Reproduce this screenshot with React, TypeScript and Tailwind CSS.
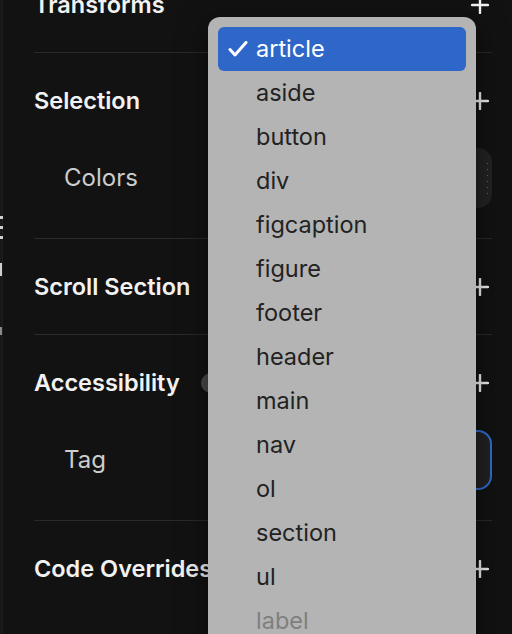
import React from 'react';

const tags = [
  'article',
  'aside',
  'button',
  'div',
  'figcaption',
  'figure',
  'footer',
  'header',
  'main',
  'nav',
  'ol',
  'section',
  'ul'
];

const PlusIcon = () => (
  <svg width="18" height="18" viewBox="0 0 18 18" className="mr-[3px] shrink-0">
    <path d="M9 1v16M1 9h16" stroke="#f2f2f2" strokeWidth="2.4" strokeLinecap="round" />
  </svg>
);

const CheckIcon = () => (
  <svg width="20" height="16" viewBox="0 0 20 16" className="absolute left-[10px] top-[14px]">
    <path
      d="M2 8.5l5 5.5L18 1.5"
      fill="none"
      stroke="#ffffff"
      strokeWidth="3"
      strokeLinecap="round"
      strokeLinejoin="round"
    />
  </svg>
);

const Divider = () => <div className="h-px bg-[#2a2a2a]" />;

const SectionHeader = ({ title, extra }: { title: string; extra?: React.ReactNode }) => (
  <div className="flex h-[95px] items-center justify-between">
    <div className="flex items-center gap-[21px]">
      <span className="text-[23.5px] font-semibold text-[#f2f2f2]">{title}</span>
      {extra}
    </div>
    <PlusIcon />
  </div>
);

const PropertyRow = ({ label, focused }: { label: string; focused?: boolean }) => (
  <div className="box-content flex h-[60px] items-center pb-[30px]">
    <span className="w-[190px] shrink-0 pl-[30px] text-[24px] text-[#cdcdcd]">{label}</span>
    <div
      className={
        focused
          ? 'h-[60px] flex-1 rounded-[14px] border-2 border-[#2f6bd0] bg-[#222222]'
          : 'flex h-[60px] flex-1 items-center justify-end rounded-[14px] bg-[#232323] pr-[4px]'
      }
    >
      {!focused && (
        <div className="flex flex-col gap-[5px]">
          {[0, 1, 2, 3, 4, 5].map(i => (
            <div key={i} className="h-px w-px bg-[#6a6a6a]" />
          ))}
        </div>
      )}
    </div>
  </div>
);

export default function App() {
  return (
    <div
      className="relative flex h-[634px] w-[512px] overflow-hidden bg-[#121212]"
      style={{ fontFamily: 'Inter, "Noto Sans", sans-serif' }}
    >
      <div className="relative w-[3px] shrink-0 border-r border-[#1d1d1d] bg-[#181818]">
        <div className="absolute left-0 top-[216px] h-[3px] w-[3px] bg-[#cfcfcf]" />
        <div className="absolute left-0 top-[226px] h-[3px] w-[3px] bg-[#cfcfcf]" />
        <div className="absolute left-0 top-[236px] h-[3px] w-[3px] bg-[#cfcfcf]" />
        <div className="absolute left-0 top-[263px] h-[13px] w-[2px] bg-[#cfcfcf]" />
        <div className="absolute left-0 top-[327px] h-[8px] w-[2px] bg-[#8a8a8a]" />
      </div>

      <div className="flex-1 pl-[31px] pr-[20px]">
        <div className="-mt-[43px]">
          <SectionHeader title="Transforms" />
          <Divider />
          <SectionHeader title="Selection" />
          <PropertyRow label="Colors" />
          <Divider />
          <SectionHeader title="Scroll Section" />
          <Divider />
          <SectionHeader
            title="Accessibility"
            extra={<div className="h-[20px] w-[20px] rounded-full bg-[#4a4a4a]" />}
          />
          <PropertyRow label="Tag" focused />
          <Divider />
          <SectionHeader title="Code Overrides" />
        </div>
      </div>

      <div className="absolute left-[208px] top-[17px] w-[268px] rounded-[12px] bg-[#b4b4b4] p-[10px] shadow-[0_8px_30px_rgba(0,0,0,0.5)]">
        {tags.map((tag, i) => (
          <div
            key={tag}
            className={
              i === 0
                ? 'relative flex h-[44px] items-center rounded-[6px] bg-[#2f67c8] pl-[38px] text-[23.5px] text-white'
                : 'flex h-[44px] items-center pl-[38px] text-[23.5px] text-[#222222]'
            }
          >
            {i === 0 && <CheckIcon />}
            {tag}
          </div>
        ))}
        <div className="flex h-[44px] items-center pl-[38px] text-[23.5px] text-[#7f7f7f]">label</div>
      </div>
    </div>
  );
}
